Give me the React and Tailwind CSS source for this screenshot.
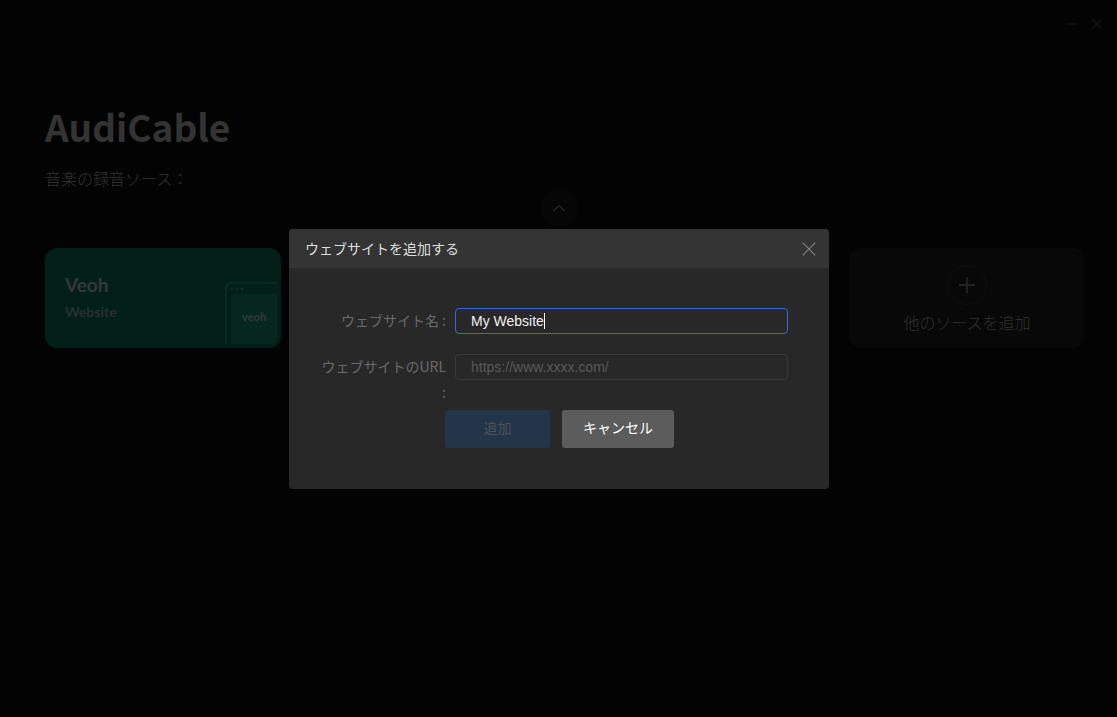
import React from "react";

function Card({ children, className = "" }) {
  return <div className={`h-[100px] rounded-xl ${className}`}>{children}</div>;
}

export default function App() {
  return (
    <div className="relative h-[717px] w-full overflow-hidden bg-[#030303] font-['Noto_Sans_CJK_JP',sans-serif]">
      {/* window controls */}
      <div className="flex h-[46px] items-center justify-end gap-[14px] pr-[14px] pt-[2px] text-[#141414]">
        <svg width="12" height="12" viewBox="0 0 12 12" stroke="currentColor" strokeWidth="1.4" fill="none">
          <path d="M1 6h10" />
        </svg>
        <svg width="12" height="12" viewBox="0 0 12 12" stroke="currentColor" strokeWidth="1.2" fill="none">
          <path d="M1.5 1.5l9 9M10.5 1.5l-9 9" />
        </svg>
      </div>

      <div className="px-[45px] pt-[53px]">
        <h1 className="text-[37px] leading-[54px] font-bold text-[#333333]">AudiCable</h1>
        <p className="mt-[13px] text-[16px] leading-[24px] text-[#333333] font-light">音楽の録音ソース：</p>

        <div className="-mt-px flex justify-center">
          <div className="flex h-[38px] w-[38px] items-center justify-center rounded-full bg-[#060606]">
            <svg width="14" height="8" viewBox="0 0 14 8" fill="none" stroke="#282828" strokeWidth="1.2">
              <path d="M1.5 7L7 1.5 12.5 7" />
            </svg>
          </div>
        </div>

        <div className="mt-[21px] grid grid-cols-[repeat(4,236px)] gap-x-[32px]">
          <Card className="relative overflow-hidden bg-[#022018] pl-[20px] pt-[22px] font-['Lato',sans-serif]">
            <div className="text-[19px] leading-[30px] font-bold text-[#363838]">Veoh</div>
            <div className="mt-[2px] text-[14px] leading-[20px] font-bold text-[#2b302e]">Website</div>
            <svg className="absolute right-[4px] bottom-[4px]" width="52" height="62" viewBox="0 0 52 62" fill="none">
              <path d="M1 62V6a5 5 0 0 1 5-5h46" stroke="#083024" strokeWidth="1.6" />
              <circle cx="7" cy="7" r="1" fill="#1c3a2f" />
              <circle cx="12" cy="7" r="1" fill="#1c3a2f" />
              <circle cx="17" cy="7" r="1" fill="#1c3a2f" />
              <path d="M6 12h46v44a6 6 0 0 1-6 6H6z" fill="#05271d" />
              <text x="17" y="39" fontFamily="Lato, sans-serif" fontWeight="900" fontSize="11" fill="#2f3a36">veoh</text>
            </svg>
          </Card>
          <Card className="bg-[#022018]" />
          <Card className="bg-[#022018]" />
          <Card className="flex flex-col items-center bg-[#080808] pt-[17px]">
            <div className="flex h-[40px] w-[40px] items-center justify-center rounded-full border border-[#0f0f0f]">
              <svg width="16" height="16" viewBox="0 0 16 16" stroke="#2b2b2b" strokeWidth="1.4" fill="none">
                <path d="M8 0v16M0 8h16" />
              </svg>
            </div>
            <div className="mt-[5px] text-[16px] leading-[24px] text-[#323232] font-light">他のソースを追加</div>
          </Card>
        </div>
      </div>

      {/* modal dialog */}
      <div className="absolute left-[289px] top-[229px] h-[260px] w-[540px] overflow-hidden rounded-[4px] bg-[#282828]">
        <div className="flex h-[39px] items-center justify-between bg-[#343434] pl-[16px] pr-[13px]">
          <span className="text-[14px] text-[#dedede]">ウェブサイトを追加する</span>
          <svg width="14" height="14" viewBox="0 0 14 14" stroke="#808080" strokeWidth="1.2" fill="none">
            <path d="M.7.7l12.6 12.6M13.3.7L.7 13.3" />
          </svg>
        </div>
        <div className="pt-[40px]">
          <div className="flex h-[26px]">
            <label className="ml-[26px] w-[132px] pr-[1px] text-right text-[14px] leading-[24px] text-[#6a6a6a]">ウェブサイト名 :</label>
            <div className="ml-[8px] flex h-[26px] w-[333px] items-center rounded-[4px] border border-[#2f6bd8] pl-[15px]">
              <span className="font-['Liberation_Sans',sans-serif] text-[14px] text-[#f0f0f0]">My Website</span>
              <span className="h-[16px] w-px bg-white" />
            </div>
          </div>
          <div className="mt-[20px] flex h-[52px]">
            <label className="ml-[26px] w-[132px] pr-[1px] text-right text-[14px] leading-[24px] text-[#6a6a6a]">
              <span className="block leading-[26px] -mt-px">ウェブサイトのURL :</span>
            </label>
            <div className="ml-[8px] flex h-[26px] w-[333px] items-center rounded-[4px] border border-[#3a3a3a] pl-[15px]">
              <span className="font-['Liberation_Sans',sans-serif] text-[14px] text-[#595959]">https://www.xxxx.com/</span>
            </div>
          </div>
          <div className="mt-[4px] flex gap-[12px] pl-[156px]">
            <button className="h-[38px] w-[105px] rounded-[3px] bg-[#223549] pb-[3px] text-[14px] text-[#4d5358]">追加</button>
            <button className="h-[38px] w-[112px] rounded-[3px] bg-[#5c5c5c] pb-[3px] text-[14px] text-white">キャンセル</button>
          </div>
        </div>
      </div>
    </div>
  );
}
